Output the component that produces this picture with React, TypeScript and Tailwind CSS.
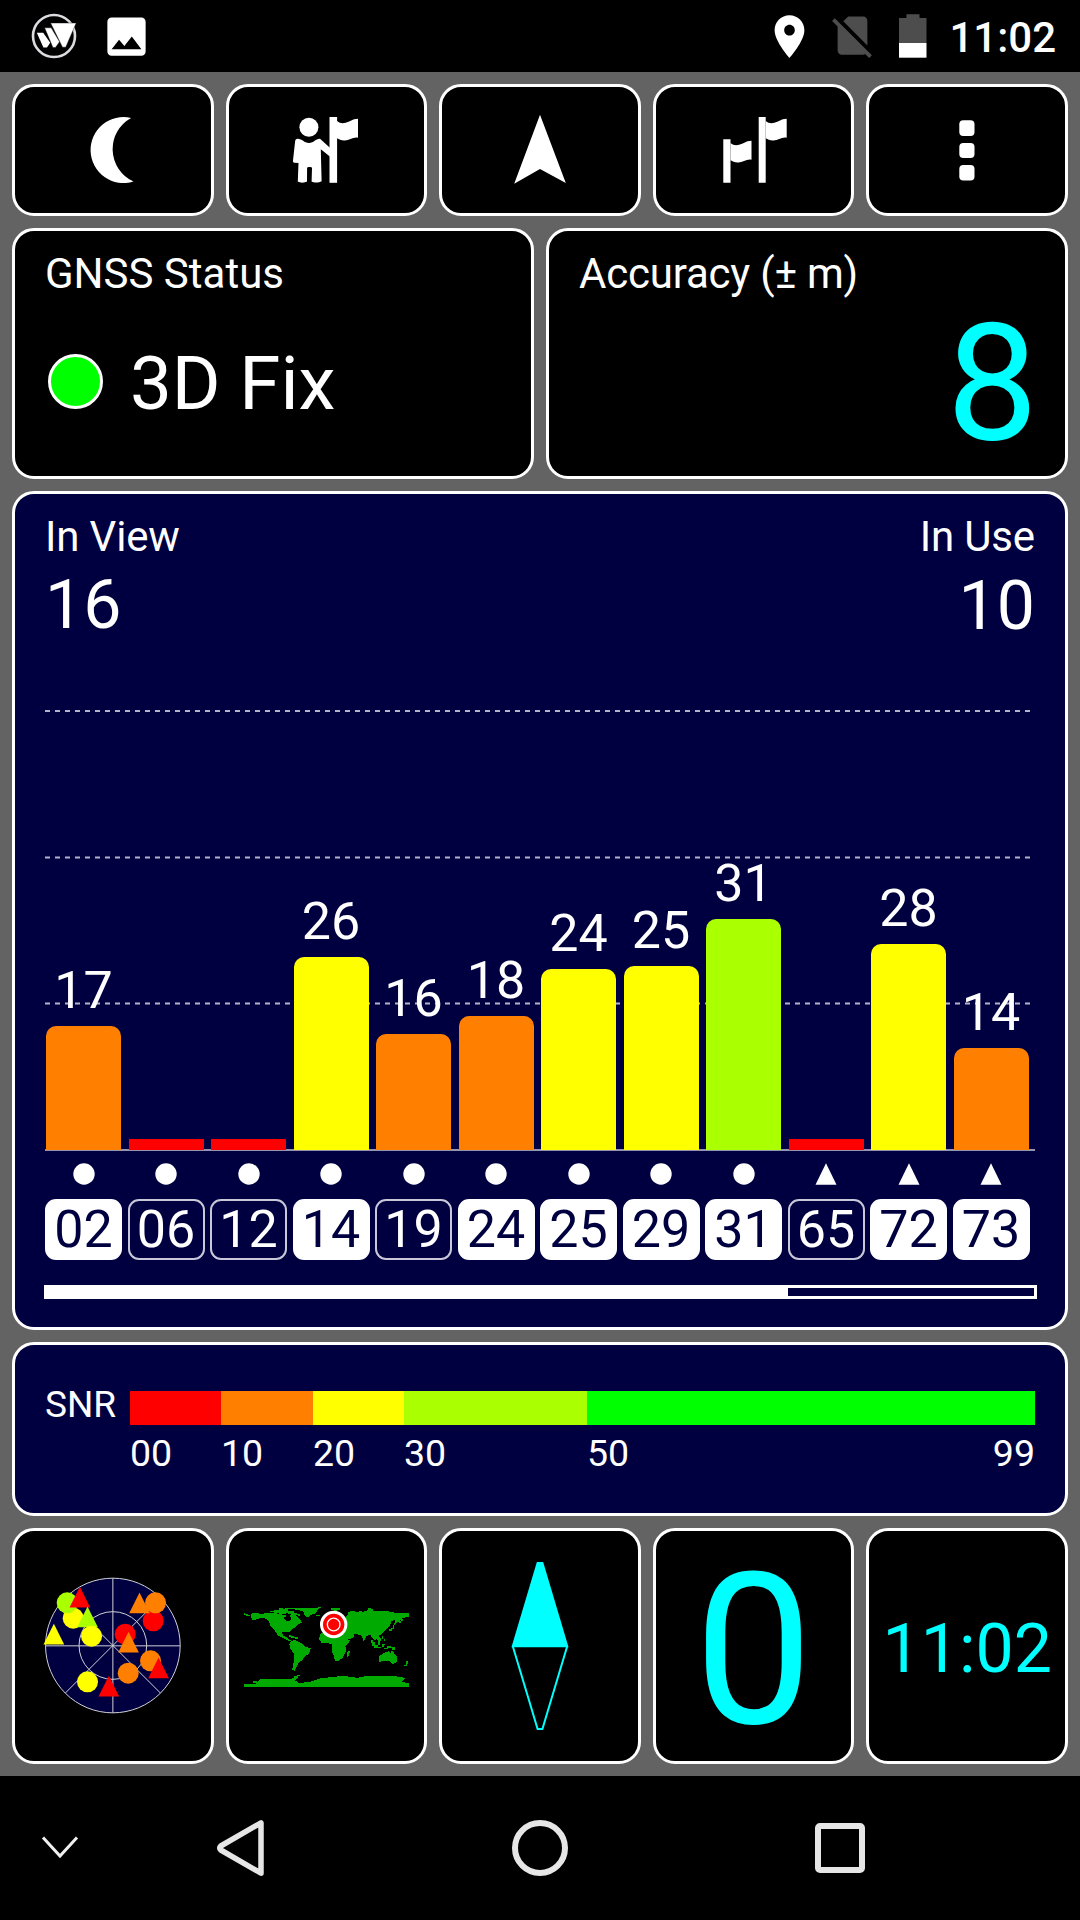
import React from "react";

type Shape = "circle" | "triangle";

interface Satellite {
  id: string;
  snr: number | null;
  height: number;
  color: string;
  shape: Shape;
  used: boolean;
}

interface SkyMarker {
  x: number;
  y: number;
  shape: Shape;
  color: string;
}

const RED = "#ff0000";
const ORANGE = "#ff8000";
const YELLOW = "#ffff00";
const LIME = "#aaff00";

const satellites: Satellite[] = [
  { id: "02", snr: 17, height: 124, color: ORANGE, shape: "circle", used: true },
  { id: "06", snr: null, height: 11, color: RED, shape: "circle", used: false },
  { id: "12", snr: null, height: 11, color: RED, shape: "circle", used: false },
  { id: "14", snr: 26, height: 193, color: YELLOW, shape: "circle", used: true },
  { id: "19", snr: 16, height: 116, color: ORANGE, shape: "circle", used: false },
  { id: "24", snr: 18, height: 134, color: ORANGE, shape: "circle", used: true },
  { id: "25", snr: 24, height: 181, color: YELLOW, shape: "circle", used: true },
  { id: "29", snr: 25, height: 184, color: YELLOW, shape: "circle", used: true },
  { id: "31", snr: 31, height: 231, color: LIME, shape: "circle", used: true },
  { id: "65", snr: null, height: 11, color: RED, shape: "triangle", used: false },
  { id: "72", snr: 28, height: 206, color: YELLOW, shape: "triangle", used: true },
  { id: "73", snr: 14, height: 102, color: ORANGE, shape: "triangle", used: true },
];

// marker centres in the sky plot, drawn in this order
const skyMarkers: SkyMarker[] = [
  { x: 219, y: 296, shape: "circle", color: YELLOW },
  { x: 201, y: 250, shape: "circle", color: LIME },
  { x: 239, y: 234, shape: "triangle", color: RED },
  { x: 262, y: 293, shape: "triangle", color: LIME },
  { x: 274, y: 350, shape: "circle", color: YELLOW },
  { x: 161, y: 345, shape: "triangle", color: YELLOW },
  { x: 459, y: 304, shape: "circle", color: RED },
  { x: 418, y: 251, shape: "triangle", color: ORANGE },
  { x: 466, y: 250, shape: "circle", color: ORANGE },
  { x: 375, y: 344, shape: "circle", color: RED },
  { x: 385, y: 369, shape: "triangle", color: ORANGE },
  { x: 451, y: 424, shape: "circle", color: ORANGE },
  { x: 475, y: 446, shape: "triangle", color: RED },
  { x: 384, y: 461, shape: "circle", color: ORANGE },
  { x: 262, y: 487, shape: "circle", color: YELLOW },
  { x: 326, y: 501, shape: "triangle", color: RED },
];

function Card({ className = "", children }: { className?: string; children?: React.ReactNode }) {
  return (
    <div className={`rounded-[22px] border-[3px] border-white ${className}`}>{children}</div>
  );
}

function BrandIcon() {
  return (
    <svg width="48" height="48" viewBox="0 0 48 48" fill="#fff">
      <circle cx="24" cy="24" r="21" fill="none" stroke="#dcdce0" strokeWidth="2.600" />
      <path d="M6.800 20.800h6.400l7 10-3.200 4.800h-3.600z" />
      <path d="M14.600 15.800h6.600l8.400 14-4.100 5.600h-2.600z" stroke="#000" strokeWidth=".4" />
      <path d="M20.600 11h25.600L35.700 35.200h-3.200z" stroke="#000" strokeWidth=".4" />
    </svg>
  );
}

function StatusBar() {
  return (
    <div className="flex h-[72px] justify-between bg-black pl-[30px] pr-[24px]">
      <div className="flex">
        <div className="pt-[12px]">
          <BrandIcon />
        </div>
        <svg className="ml-[23px] mt-[10.500px]" width="51" height="51" viewBox="0 0 24 24" fill="#fff">
          <path d="M21 19V5c0-1.100-.9-2-2-2H5c-1.100 0-2 .9-2 2v14c0 1.100.9 2 2 2h14c1.100 0 2-.9 2-2zM8.500 13.500l2.500 3.010L14.500 12l4.500 6H5l3.500-4.500z" />
        </svg>
      </div>
      <div className="flex">
        <svg className="mt-[11px]" width="51" height="51" viewBox="0 0 24 24" fill="#fff">
          <path d="M12 2C8.130 2 5 5.130 5 9c0 5.250 7 13 7 13s7-7.750 7-13c0-3.870-3.130-7-7-7zm0 9.500c-1.380 0-2.500-1.120-2.500-2.500s1.120-2.500 2.500-2.500 2.500 1.120 2.500 2.500-1.120 2.500-2.500 2.500z" />
        </svg>
        <svg className="ml-[12px] mt-[10px]" width="51" height="51" viewBox="0 0 24 24" fill="#4d4d4d">
          <path d="M18.990 5c0-1.100-.89-2-1.990-2h-7L7.660 5.340 19 16.680 18.990 5zM3.650 3.880L2.380 5.150 5 7.770V19c0 1.100.9 2 2 2h10.010c.35 0 .67-.1.96-.26l1.880 1.880 1.270-1.270L3.650 3.880z" />
        </svg>
        <svg className="ml-[20px] mt-[14px]" width="30" height="44" viewBox="0 0 30 44">
          <path d="M8.400 0.300H21.500V4H28.500V29H1V4H8.400z" fill="#4d4d4d" />
          <path d="M1 29H28.500V43.700H1z" fill="#fff" />
        </svg>
        <span className="ml-[21px] pt-[17px] text-[42px] font-medium leading-none text-white">11:02</span>
      </div>
    </div>
  );
}

const flagPath = "M0 4C6 9 12 4 17 2.200L21 1.700V20.700C16 19.500 12 24 7 23.500C4 23.500 2 22.500 0 21.300z";

function Toolbar() {
  const icons = [
    <path d="M54.100 3.900A33 33 0 1 0 56.500 67.500A35.600 35.600 0 0 1 54.100 3.900z" />,
    <>
      <circle cx="18.900" cy="13.300" r="9.500" />
      <path d="M7.500 24.800C12 24.600 14 29 19 29C24 29 26 24.400 30 24.800L40.200 34V42.700L30.800 35.300L31.600 67.200C29 69 24 69 21.600 67.600L22 54C22 52.800 17.100 52.800 17.100 54L17 67.600C14.500 69 10 69 7.800 67.600L8.500 49L4.500 48.800C3 48.600 2.900 47.600 3 46.500L5.100 27.500C5.300 25.800 6 24.900 7.500 24.800z" />
      <path d="M39.500 3h7.600v65.800h-7.600z" />
      <path d={flagPath} transform="translate(47 3)" />
    </>,
    <path d="M36 .8L61.800 69L36 55L10.200 69.800z" />,
    <>
      <path d="M5.300 25.200h7.200v43.600h-7.200zM40.700 3h7v65.800h-7z" />
      <path d={flagPath} transform="translate(12.500 25)" />
      <path d={flagPath} transform="translate(47.700 3)" />
    </>,
    <>
      <rect x="28.300" y="6.300" width="15.200" height="15.600" rx="4" />
      <rect x="28.300" y="29" width="15.200" height="15" rx="4" />
      <rect x="28.300" y="51" width="15.200" height="15.400" rx="4" />
    </>,
  ];

  return (
    <div className="grid h-[132px] grid-cols-5 gap-3">
      {icons.map((icon, i) => (
        <Card key={i} className="flex items-center justify-center bg-black">
          <svg width="72" height="72" viewBox="0 0 72 72" fill="#fff">
            {icon}
          </svg>
        </Card>
      ))}
    </div>
  );
}

function StatusCards() {
  return (
    <div className="grid h-[251px] grid-cols-2 gap-3">
      <Card className="bg-black px-[30px] pt-[22px]">
        <div className="text-[42px] leading-none">GNSS Status</div>
        <div className="mt-[52px] flex items-start">
          <div className="ml-[3px] mt-[7px] h-[55px] w-[55px] rounded-full border-[3px] border-white bg-[#00ff00]" />
          <span className="ml-[27px] text-[74.500px] leading-none">3D Fix</span>
        </div>
      </Card>
      <Card className="bg-black pl-[30px] pr-[27px] pt-[22px]">
        <div className="text-[42px] leading-none tracking-[-0.2px]">Accuracy (± m)</div>
        <div className="mt-[7px] text-right text-[163px] leading-none text-[#00ffff]">8</div>
      </Card>
    </div>
  );
}

function SignalChart() {
  return (
    <div className="relative h-[511px]">
      {/* 20 dB grid lines behind the bars */}
      <svg className="absolute left-0 top-0" width="993" height="511" viewBox="0 0 993 511">
        <g stroke="#b4b4c8" strokeWidth="2" strokeDasharray="5 5">
          <path d="M0 71H987" />
          <path d="M0 217.500H987" />
          <path d="M0 363.500H987" />
        </g>
        <path d="M0 510H990" stroke="#9494b0" strokeWidth="2" />
      </svg>
      <div className="relative grid h-[510px] w-[990px] grid-cols-12">
        {satellites.map((sat) => (
          <div key={sat.id} className="flex flex-col items-center justify-end pr-[5.500px]">
            {sat.snr !== null && (
              <span className="mb-[9px] text-[52px] leading-none">{sat.snr}</span>
            )}
            <div
              className={sat.snr === null ? "w-[75px]" : "w-[75px] rounded-t-[10px]"}
              style={{ height: sat.height, backgroundColor: sat.color }}
            />
          </div>
        ))}
      </div>
    </div>
  );
}

function SatelliteLabels() {
  return (
    <div className="mt-[12px] grid w-[990px] grid-cols-12">
      {satellites.map((sat) => (
        <div key={sat.id} className="flex flex-col items-center pr-[5.500px]">
          <svg width="22" height="22" viewBox="0 0 22 22" fill="#fff">
            {sat.shape === "circle" ? <circle cx="11" cy="11" r="10.700" /> : <path d="M11 .3L21.500 21.700H.5z" />}
          </svg>
          <div
            className={`mt-[14px] h-[61px] w-full rounded-[11px] border-2 pt-[3px] text-center text-[52px] leading-none ${
              sat.used ? "border-white bg-white text-[#000040]" : "border-[#c8c8d8]"
            }`}
          >
            {sat.id}
          </div>
        </div>
      ))}
    </div>
  );
}

function SatellitePanel() {
  return (
    <Card className="h-[839px] bg-[#000040] pl-[30px] pr-[28px] pt-[22px]">
      <div className="flex justify-between pr-[2px]">
        <div>
          <div className="text-[42px] leading-none tracking-[-0.15px]">In View</div>
          <div className="mt-[13px] text-[68px] leading-none">16</div>
        </div>
        <div className="text-right">
          <div className="text-[42px] leading-none tracking-[-0.15px]">In Use</div>
          <div className="mt-[14px] text-[68px] leading-none">10</div>
        </div>
      </div>
      <SignalChart />
      <SatelliteLabels />
      <div className="-ml-px mt-[25px] h-[14px] w-[993px] border-[3px] border-white">
        <div className="h-full w-[741px] bg-white" />
      </div>
    </Card>
  );
}

function SnrLegend() {
  return (
    <Card className="h-[174px] bg-[#000040] px-[30px] pt-[41px]">
      <div className="flex">
        <span className="w-[85px] text-[37px] leading-none">SNR</span>
        <div className="mt-[5px] w-[905px]">
          <div className="flex h-[34px]">
            <div className="w-[91px] bg-[#ff0000]" />
            <div className="w-[92px] bg-[#ff8000]" />
            <div className="w-[91px] bg-[#ffff00]" />
            <div className="w-[183px] bg-[#aaff00]" />
            <div className="flex-1 bg-[#00ff00]" />
          </div>
          <div className="mt-[10px] flex text-[37.500px] leading-none">
            <span className="w-[91px]">00</span>
            <span className="w-[92px]">10</span>
            <span className="w-[91px]">20</span>
            <span className="w-[183px]">30</span>
            <span className="flex-1">50</span>
            <span>99</span>
          </div>
        </div>
      </div>
    </Card>
  );
}

function SkyPlot() {
  return (
    <svg width="142" height="142" viewBox="125.400 166.500 426 426">
      <g fill="none" stroke="#d0d0d8" strokeWidth="3">
        <circle cx="338" cy="378" r="202" fill="#000040" />
        <circle cx="338" cy="378" r="101.500" />
        <path d="M338 176V580M136 379H540M195 235L481 521M481 235L195 521" />
      </g>
      {skyMarkers.map((m, i) =>
        m.shape === "circle" ? (
          <circle key={i} cx={m.x} cy={m.y} r="31.500" fill={m.color} />
        ) : (
          <path key={i} d="M0 -32L31 30H-31z" transform={`translate(${m.x} ${m.y})`} fill={m.color} />
        )
      )}
    </svg>
  );
}

function WorldMap() {
  return (
    <svg width="168" height="84" viewBox="65.500 254.500 504 252">
      <g fill="#00aa00" shapeRendering="crispEdges">
        {/* Americas */}
        <path d="M92 284L106 280L118 284L146 282L170 283L186 286L200 290L190 297L198 304L210 306L213 296L208 290L216 280L226 282L230 292L240 300L246 312L236 314L228 322L214 332L208 340L198 338L186 340L188 350L196 352L206 360L212 364L204 364L192 358L174 350L164 334L152 322L146 306L136 298L122 296L104 302L96 304L94 296z" />
        <path d="M70 281h5v4h8v3h6v3h-12v-4h-7zM148 276h14v-4h12v4h10v-5h18v4h10v6h-16v3h-20v-3h-16v-2h-12zM160 271h16v-4h12v3h14v4h-20v2h-22zM204 276h16v4h10v5h10v6h-8v-4h-12v-4h-16z" />
        <path d="M194 265H292L296 268L290 276L286 282L272 288L262 294L252 288L250 278L236 272L214 270L194 268zM294 264h8v3h-8zM286 287h14v4h-12z" />
        <path d="M206 347h6v4h10v3h12v5h-10v-3h-12v-4h-6z" />
        <path d="M212 366L224 362L244 372L254 382L272 388L266 404L254 412L246 424L236 430L228 444L224 455L216 452L220 432L221 404L209 386L208 376z" />
        {/* Africa */}
        <path d="M300 344L312 340H368L380 362L390 364L376 382V398L366 418L352 426L344 424L340 408L334 394V374L316 372L304 370L297 360zM382 398L390 394L386 410L380 414z" />
        {/* Europe and Asia */}
        <path d="M362 340L372 300L384 286L404 280L420 276L430 278L450 270L460 274L490 274L520 280L567 282V293L548 296L534 308L522 320L524 302L514 306L510 318L500 330L486 344L476 350L484 362L480 368L470 360L464 362L458 358L450 346L440 350L430 366L424 350L410 344L400 344L402 354L382 362L368 344z" />
        <path d="M332 267h26v4h-8v3h-8v-3h-10zM384 279h6v-3h14v4h-12v4h-8zM442 266h10v3h6v4h-16zM532 312h5v-6h6v-6h6v5h-6v7h-6zM506 330h6v-4h6v-8h4v10h-8v6h-8zM486 350h3v8h6v6h-5v-4h-4z" />
        {/* Indonesia and Oceania */}
        <path d="M452 362h6v6h6v8h8v6h10v4h-20v-6h-6v-8h-4zM472 366h8v10h-6zM484 374h10v4h-4v6h-6zM500 380h12v3h12v9h-10v-5h-14zM490 386h12v4h-12z" />
        <path d="M476 412L494 400L506 396L510 402L516 394L532 416L528 432L516 434L506 424L492 424L478 428zM558 426h6v8h-4v6h-8v-4h6z" />
        {/* Antarctica */}
        <path d="M70 494L108 493L118 481L212 480L236 470L226 484L236 492L270 488L304 477L370 470L412 476L440 470L530 472L556 476L544 488L567 492V502H70zM97 485h14v5h-14zM222 470h8v-4h8v5h-8v4h-8z" />
      </g>
      <circle cx="340.500" cy="316" r="41" fill="#fff" />
      <circle cx="340.500" cy="316" r="32" fill="#ff0000" />
      <circle cx="340.500" cy="316" r="19" fill="none" stroke="#fff" strokeWidth="4" />
    </svg>
  );
}

function BottomCards() {
  return (
    <div className="grid h-[236px] grid-cols-5 gap-3">
      <Card className="flex items-center justify-center bg-black">
        <SkyPlot />
      </Card>
      <Card className="flex items-center justify-center bg-black">
        <WorldMap />
      </Card>
      <Card className="flex items-center justify-center bg-black">
        <svg width="58" height="170" viewBox="0 0 58 170" stroke="#00ffff" strokeWidth="2">
          <path d="M26.600 2H31.400L56.200 85.300H1.800z" fill="#00ffff" />
          <path d="M1.800 85.300L26.600 168H31.400L56.200 85.300" fill="none" />
        </svg>
      </Card>
      <Card className="flex items-center justify-center bg-black">
        <span className="mt-[11px] text-[211px] leading-none text-[#00ffff]">0</span>
      </Card>
      <Card className="flex items-center justify-center bg-black">
        <span className="mt-[5px] text-[68px] leading-none text-[#00ffff]">11:02</span>
      </Card>
    </div>
  );
}

function NavigationBar() {
  return (
    <div className="flex h-[144px] items-center bg-black">
      <div className="flex w-[120px] justify-center">
        <svg width="38" height="24" viewBox="0 0 38 24" fill="none" stroke="#f0f0f0" strokeWidth="3">
          <path d="M2 1.500L19 20L36 1.500" />
        </svg>
      </div>
      <div className="flex w-[240px] justify-center">
        <svg width="60" height="60" viewBox="0 0 60 60" fill="none" stroke="#e6e6e6" strokeWidth="5.500" strokeLinejoin="round">
          <path d="M51 4.800V55.200L10.800 32Q8.800 30 10.800 28z" />
        </svg>
      </div>
      <div className="flex w-[360px] justify-center">
        <svg width="60" height="60" viewBox="0 0 60 60" fill="none" stroke="#e6e6e6" strokeWidth="6">
          <circle cx="30" cy="30" r="25" />
        </svg>
      </div>
      <div className="flex w-[240px] justify-center">
        <div className="h-[50px] w-[50px] rounded-[5px] border-[6px] border-[#e6e6e6]" />
      </div>
    </div>
  );
}

export default function App() {
  return (
    <div className="h-[1920px] w-[1080px] overflow-hidden bg-[#636363] font-['Roboto',sans-serif] text-white">
      <StatusBar />
      <div className="flex h-[1704px] flex-col gap-3 p-3">
        <Toolbar />
        <StatusCards />
        <SatellitePanel />
        <SnrLegend />
        <BottomCards />
      </div>
      <NavigationBar />
    </div>
  );
}
